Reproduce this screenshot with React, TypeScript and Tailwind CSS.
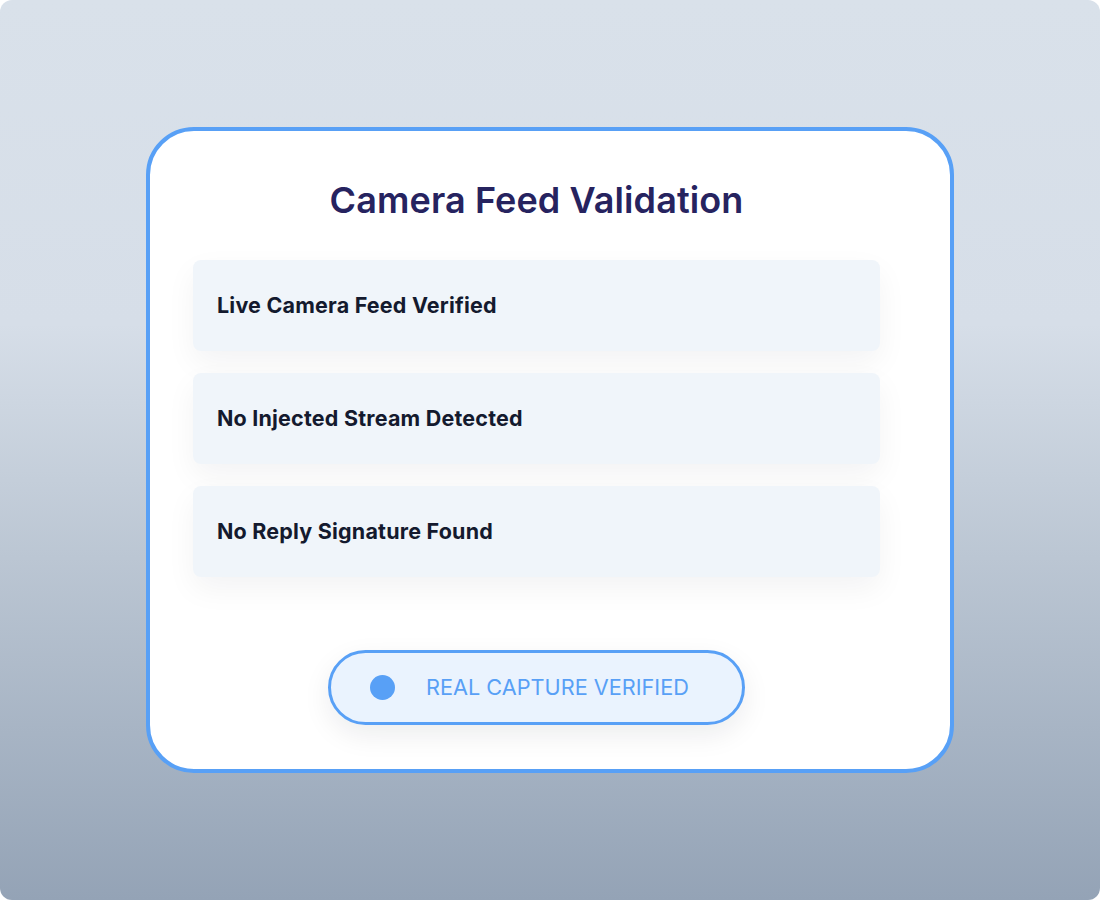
import React from 'react';

const checks = [
  "Live Camera Feed Verified",
  "No Injected Stream Detected",
  "No Reply Signature Found",
];

export default function App() {
  return (
    <div className="w-[1100px] h-[900px] bg-white" style={{ fontFamily: 'Inter, "Noto Sans", sans-serif' }}>
      <div className="w-full h-full rounded-[12px] flex items-center justify-center bg-[linear-gradient(180deg,#d9e1ea_0%,#d6dee8_36%,#bbc6d3_62%,#94a3b6_100%)]">
        <div className="w-[808px] h-[646px] bg-white border-4 border-[#58a0f6] rounded-[48px] pt-[47px] pb-[42px] pl-[43px] pr-[70px]">
          <h1 className="text-center text-[36px] leading-[44px] font-semibold text-[#26235f] tracking-[0.1px]">
            Camera Feed Validation
          </h1>

          <div className="mt-[38px] flex flex-col gap-[22px]">
            {checks.map((label) => (
              <div
                key={label}
                className="h-[91px] rounded-[8px] bg-[#f0f5fa] flex items-center pl-[24px] shadow-[0_12px_30px_rgba(15,23,42,0.05)]"
              >
                <span className="text-[21.5px] font-bold text-[#141a2e] tracking-[0.2px]">{label}</span>
              </div>
            ))}
          </div>

          <div className="mt-[73px] flex justify-center">
            <div className="w-[417px] h-[75px] rounded-full border-[3px] border-[#58a0f6] bg-[#eaf3fe] flex items-center pl-[39px] shadow-[0_10px_28px_rgba(15,23,42,0.08)]">
              <span className="w-[25px] h-[25px] rounded-full bg-[#58a0f6]" />
              <span className="ml-[31px] text-[21.7px] text-[#58a0f6]">REAL CAPTURE VERIFIED</span>
            </div>
          </div>
        </div>
      </div>
    </div>
  );
}
